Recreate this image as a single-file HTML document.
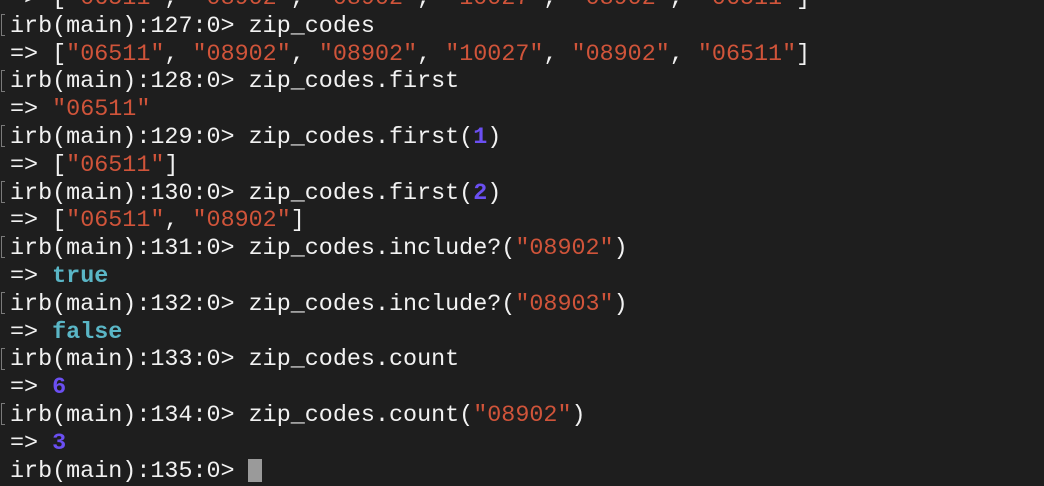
<!DOCTYPE html>
<html><head><style>
html,body{margin:0;padding:0;background:#1e1e1e;width:1044px;height:482px;overflow:hidden}
.t{position:absolute;left:10px;top:-14px;font-family:"Liberation Mono",monospace;font-size:23.4px;line-height:27.8px;color:#f2f2f2;white-space:pre}
.s{color:#d0543a}.n{color:#6b4ff2;font-weight:bold}.b{color:#5ab6c6;font-weight:bold}
.br{position:absolute;left:1px;width:4px;height:22px;border:1.5px solid #7a7a7a;border-right:none;box-sizing:border-box}
.cur{position:absolute;left:248px;top:459px;width:14px;height:23px;background:#9a9a9a}
</style></head><body>
<div class="t">=&gt; [<span class="s">"06511"</span>, <span class="s">"08902"</span>, <span class="s">"08902"</span>, <span class="s">"10027"</span>, <span class="s">"08902"</span>, <span class="s">"06511"</span>]
irb(main):127:0&gt; zip_codes
=&gt; [<span class="s">"06511"</span>, <span class="s">"08902"</span>, <span class="s">"08902"</span>, <span class="s">"10027"</span>, <span class="s">"08902"</span>, <span class="s">"06511"</span>]
irb(main):128:0&gt; zip_codes.first
=&gt; <span class="s">"06511"</span>
irb(main):129:0&gt; zip_codes.first(<span class="n">1</span>)
=&gt; [<span class="s">"06511"</span>]
irb(main):130:0&gt; zip_codes.first(<span class="n">2</span>)
=&gt; [<span class="s">"06511"</span>, <span class="s">"08902"</span>]
irb(main):131:0&gt; zip_codes.include?(<span class="s">"08902"</span>)
=&gt; <span class="b">true</span>
irb(main):132:0&gt; zip_codes.include?(<span class="s">"08903"</span>)
=&gt; <span class="b">false</span>
irb(main):133:0&gt; zip_codes.count
=&gt; <span class="n">6</span>
irb(main):134:0&gt; zip_codes.count(<span class="s">"08902"</span>)
=&gt; <span class="n">3</span>
irb(main):135:0&gt; </div>
<div class="br" style="top:14px"></div>
<div class="br" style="top:70px"></div>
<div class="br" style="top:125px"></div>
<div class="br" style="top:181px"></div>
<div class="br" style="top:236px"></div>
<div class="br" style="top:292px"></div>
<div class="br" style="top:348px"></div>
<div class="br" style="top:403px"></div>
<div class="cur"></div>
</body></html>
